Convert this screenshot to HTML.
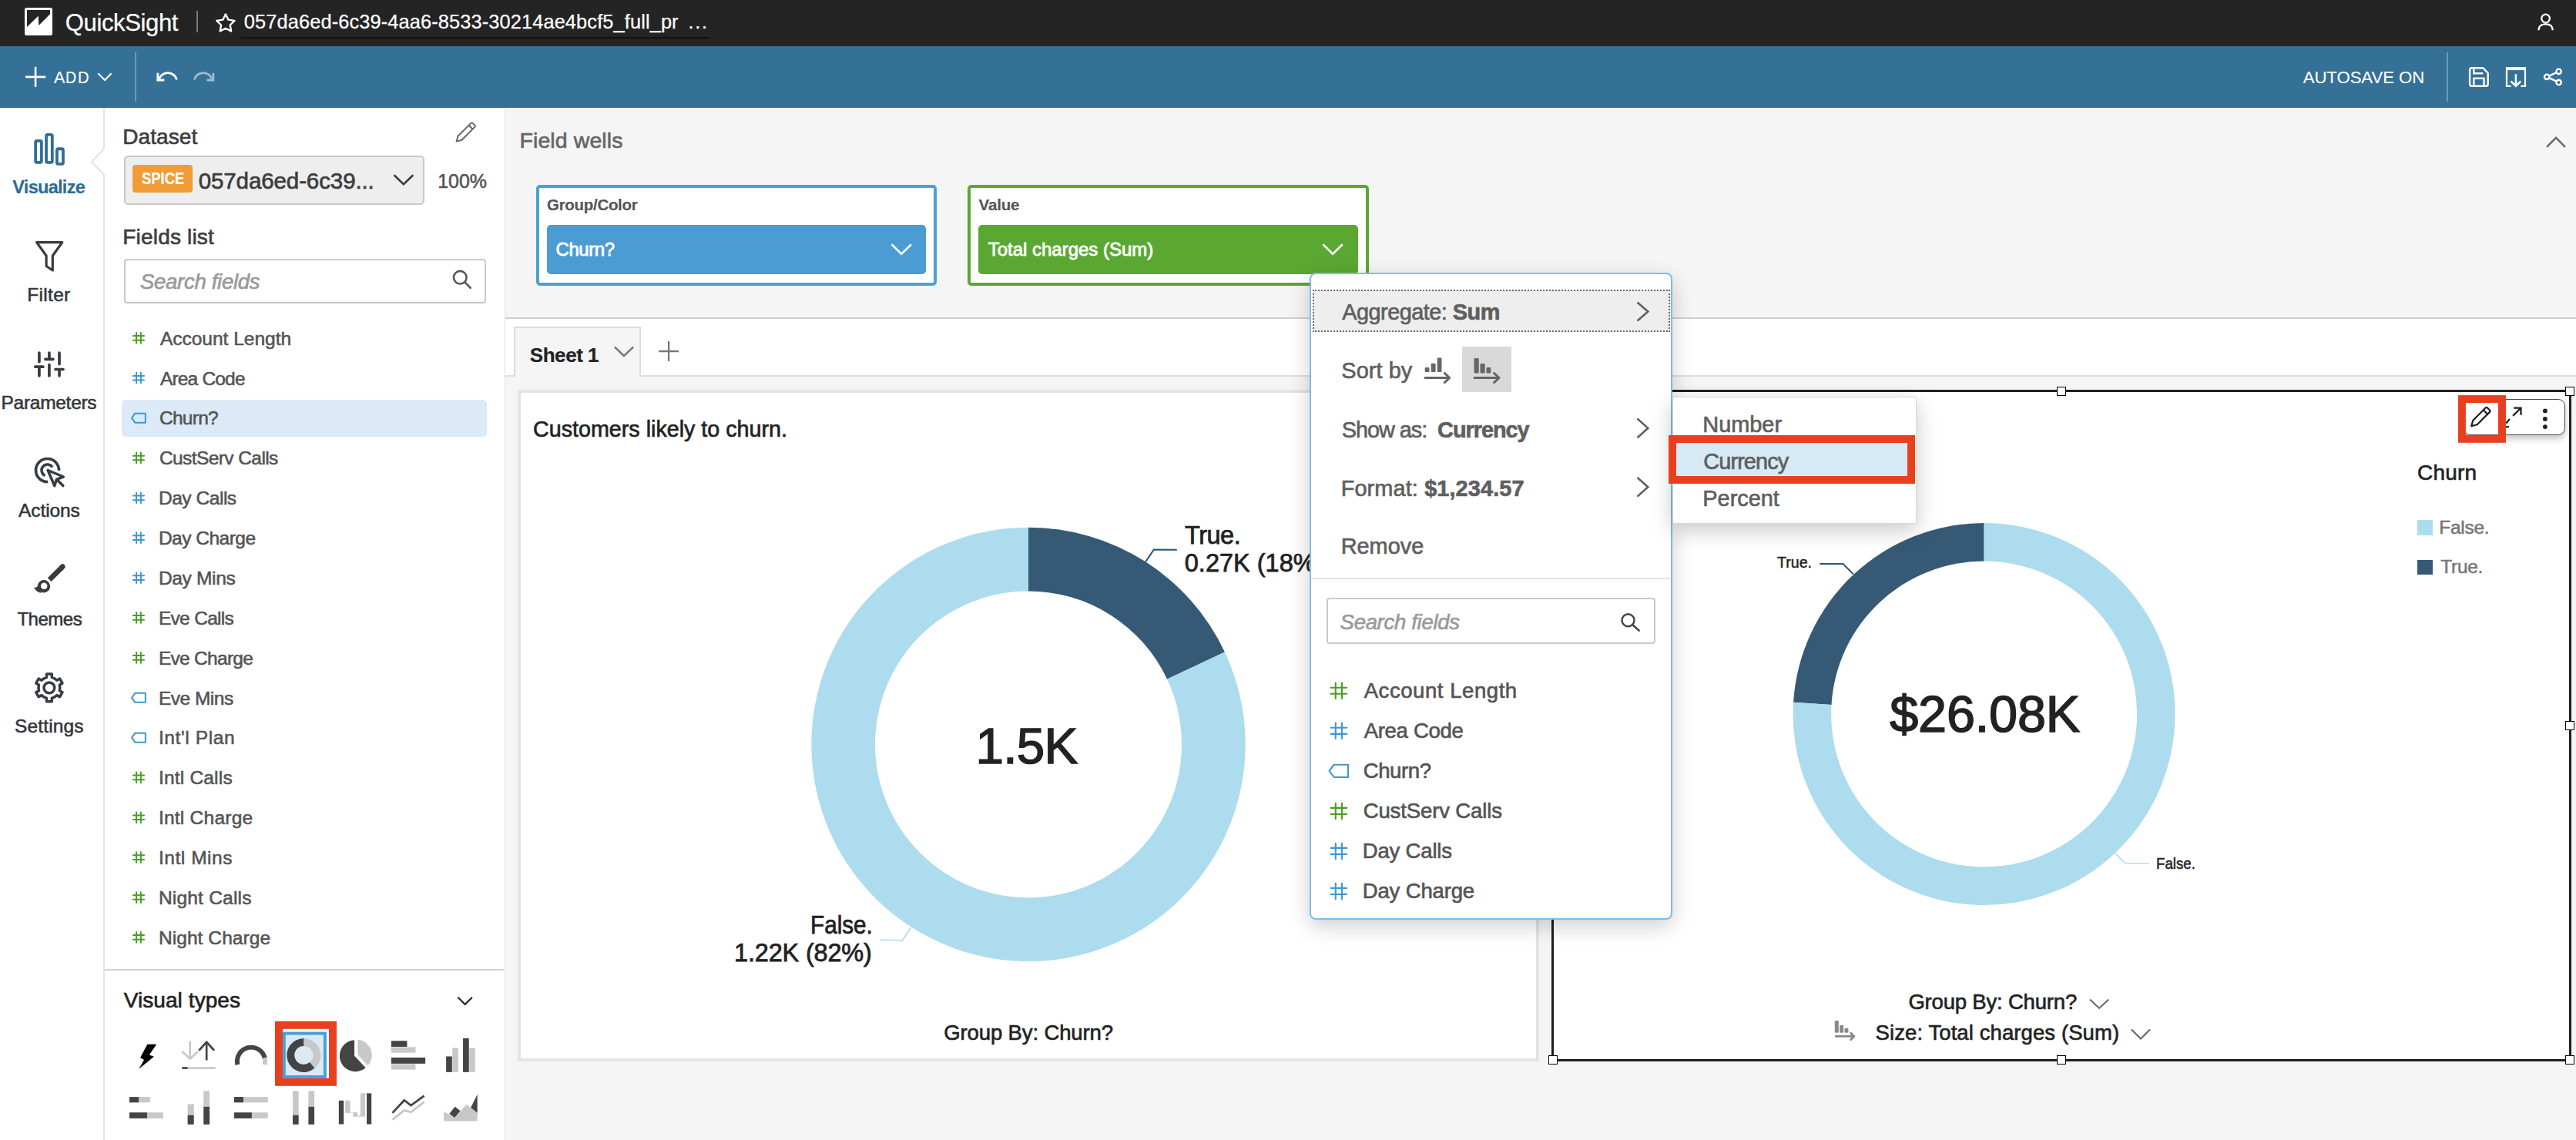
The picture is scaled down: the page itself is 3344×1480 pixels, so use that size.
<!DOCTYPE html>
<html><head><meta charset="utf-8"><title>QuickSight</title>
<style>
html,body{margin:0;padding:0;width:3344px;height:1480px;overflow:hidden;background:#f4f4f4}
body{position:relative;font-family:"Liberation Sans",sans-serif}
.a{position:absolute;display:block}
.t{position:absolute;white-space:pre;font-family:"Liberation Sans",sans-serif}
b{font-weight:bold}
</style></head><body>
<div class="a" style="left:0px;top:0px;width:3344px;height:60px;background:#242424"></div><div class="a" style="left:0px;top:60px;width:3344px;height:80px;background:#357096"></div><div class="a" style="left:0px;top:140px;width:135px;height:1340px;background:#fff"></div><div class="a" style="left:135px;top:140px;width:520px;height:1340px;background:#fff"></div><div class="a" style="left:654.5px;top:140px;width:1.5px;height:1340px;background:#e0e0e0"></div><div class="a" style="left:656px;top:140px;width:2688px;height:273px;background:#f5f5f5"></div><div class="a" style="left:656px;top:412px;width:2688px;height:2px;background:#cfcfcf"></div><div class="a" style="left:656px;top:414px;width:2688px;height:74px;background:#fff"></div><div class="a" style="left:656px;top:487px;width:2688px;height:2px;background:#dedede"></div><div class="a" style="left:656px;top:489px;width:2688px;height:991px;background:#f5f5f5"></div><svg class="a" style="left:0px;top:0px" width="100" height="60" viewBox="0 0 100 60"><rect x="32" y="10" width="36" height="36" rx="2.5" fill="#fff"/><polygon points="35,13 65,13 65,18.2 50.35,33 49.7,20.7 35,35.1" fill="#242424"/></svg><div class="a" style="left:255px;top:14px;width:2px;height:28px;background:#7a7a7a"></div><svg class="a" style="left:260px;top:0px" width="60" height="60" viewBox="260 0 60 60"><polygon points="292.90,18.40 296.49,25.66 304.50,26.83 298.70,32.49 300.07,40.47 292.90,36.70 285.73,40.47 287.10,32.49 281.30,26.83 289.31,25.66" fill="none" stroke="#fff" stroke-width="2.4" stroke-linejoin="round"/></svg><div class="a" style="left:313px;top:48.3px;width:608px;height:1.6px;background:#111"></div><svg class="a" style="left:3280px;top:0px" width="60" height="60" viewBox="3280 0 60 60"><circle cx="3304.6" cy="24" r="5.3" fill="none" stroke="#fff" stroke-width="2.3"/><path d="M3295.4,39.3 C3295.4,34 3299,31.3 3304.6,31.3 C3310.2,31.3 3313.8,34 3313.8,39.3" fill="none" stroke="#fff" stroke-width="2.3"/></svg><svg class="a" style="left:0px;top:60px" width="300" height="80" viewBox="0 60 300 80"><path d="M46.1,86.8 V113 M33,99.9 H59.2" stroke="#fff" stroke-width="2.6"/><polyline points="127.3,95.3 136.1,104 144.6,95.2" fill="none" stroke="#fff" stroke-width="2"/><path d="M204.8,94.8 V104 H213.3" fill="none" stroke="#fff" stroke-width="2.8"/><path d="M206.5,102.5 A12,12 0 0 1 229.4,103.5" fill="none" stroke="#fff" stroke-width="2.8"/><path d="M276.9,94.8 V104 H268.4" fill="none" stroke="#9dbdd2" stroke-width="2.8"/><path d="M275.2,102.5 A12,12 0 0 0 252.3,103.5" fill="none" stroke="#9dbdd2" stroke-width="2.8"/></svg><div class="a" style="left:175px;top:68px;width:2px;height:64px;background:#6d99b8"></div><div class="a" style="left:3176px;top:68px;width:2px;height:64px;background:#6d99b8"></div><svg class="a" style="left:3190px;top:60px" width="154" height="80" viewBox="3190 60 154 80"><path d="M3208,88.3 H3223.5 L3229.7,95 V109.5 A2.2,2.2 0 0 1 3227.5,111.7 H3208.3 A2.2,2.2 0 0 1 3206.1,109.5 V90.5 A2.2,2.2 0 0 1 3208.3,88.3 Z" fill="none" stroke="#fff" stroke-width="2.4" stroke-linejoin="round"/><path d="M3211.3,88.5 V95.2 H3223.3" fill="none" stroke="#fff" stroke-width="2.4"/><path d="M3211.3,111.5 V101.6 H3224.5 V111.5" fill="none" stroke="#fff" stroke-width="2.4"/><path d="M3252.9,89.1 H3279" stroke="#fff" stroke-width="4"/><path d="M3254,89 V111.8 H3259.7 M3272.2,111.8 H3278 V89" fill="none" stroke="#fff" stroke-width="2.2"/><path d="M3265.9,96.3 V111.5 M3259.6,105.5 L3265.9,111.8 L3272.2,105.5" fill="none" stroke="#fff" stroke-width="2.5"/><circle cx="3321.6" cy="92.8" r="3.2" fill="none" stroke="#fff" stroke-width="2.4"/><circle cx="3306.2" cy="99.8" r="3.2" fill="none" stroke="#fff" stroke-width="2.4"/><circle cx="3321.6" cy="106.9" r="3.2" fill="none" stroke="#fff" stroke-width="2.4"/><path d="M3309.1,98.5 L3318.7,94.1 M3309.1,101.1 L3318.7,105.6" stroke="#fff" stroke-width="2.4"/></svg><svg class="a" style="left:100px;top:140px" width="60" height="1340" viewBox="100 140 60 1340"><polyline points="135,140 135,193.3 119,210 135,227 135,1480" fill="none" stroke="#dddddd" stroke-width="1.6"/></svg><svg class="a" style="left:0px;top:140px" width="135" height="800" viewBox="0 140 135 800"><rect x="46.15" y="182.85" width="7.7" height="28" rx="1.6" fill="none" stroke="#336d96" stroke-width="3.8"/><rect x="60.05" y="174.95" width="7.75" height="35.9" rx="1.6" fill="none" stroke="#336d96" stroke-width="3.8"/><rect x="73.95" y="193.25" width="8" height="19.6" rx="1.6" fill="none" stroke="#336d96" stroke-width="3.8"/><polygon points="47.6,314.6 80.8,314.6 68.3,332 68.3,351 60.1,345.5 60.1,332" fill="none" stroke="#393b40" stroke-width="3.2" stroke-linejoin="round"/><path d="M50.9,458.2 V469.6 M50.9,476.2 V487.8 M45.9,476.2 H55.9 M63.9,458.2 V466.3 M63.9,473.6 V487.8 M58.9,466.3 H68.9 M77,458.2 V472.6 M77,479.5 V487.8 M72,479.5 H82" stroke="#393b40" stroke-width="3.7" stroke-linecap="round"/><path d="M62.3,625.5 A15,15 0 1 1 76.5,610.9" fill="none" stroke="#393b40" stroke-width="3.7"/><path d="M58.5,617.5 A7.6,7.6 0 1 1 68,606.5" fill="none" stroke="#393b40" stroke-width="3.5"/><polygon points="62.1,610.5 82.3,619 73.5,622.3 70.8,630.8" fill="none" stroke="#393b40" stroke-width="3.5" stroke-linejoin="round"/><path d="M74.5,623.3 L81.8,630.6" stroke="#393b40" stroke-width="3.6" stroke-linecap="round"/><path d="M64.2,752.7 L80.6,736.3" stroke="#393b40" stroke-width="6.8" stroke-linecap="butt"/><path d="M79.6,737.3 L81.2,735.7" stroke="#393b40" stroke-width="6.8" stroke-linecap="round"/><path fill-rule="evenodd" fill="#393b40" d="M65.1,761.3 A8.2,8.2 0 1 1 48.7,761.3 A8.2,8.2 0 1 1 65.1,761.3 Z M61.5,760.7 A4.3,4.3 0 1 0 52.9,760.7 A4.3,4.3 0 1 0 61.5,760.7 Z"/><path fill="#393b40" d="M44.2,762.3 C46.8,763.2 48.6,762.3 49.4,760 L53.5,769.8 C49,769.2 45.6,766.2 44.2,762.3 Z"/></svg><svg class="a" style="left:0px;top:840px" width="135" height="100" viewBox="0 840 135 100"><polygon points="56.95,880.86 60.44,879.44 60.51,875.12 67.29,875.12 67.36,879.44 70.85,880.86 73.83,883.17 77.60,881.07 80.99,886.95 77.29,889.16 77.80,892.90 77.29,896.64 80.99,898.85 77.60,904.73 73.83,902.63 70.85,904.94 67.36,906.36 67.29,910.68 60.51,910.68 60.44,906.36 56.95,904.94 53.97,902.63 50.20,904.73 46.81,898.85 50.51,896.64 50.00,892.90 50.51,889.16 46.81,886.95 50.20,881.07 53.97,883.17" fill="none" stroke="#393b40" stroke-width="3.5" stroke-linejoin="round"/><circle cx="63.9" cy="892.9" r="6.9" fill="none" stroke="#393b40" stroke-width="3.4"/></svg><svg class="a" style="left:580px;top:150px" width="50" height="50" viewBox="580 150 50 50"><path d="M592.6,183.6 L594.5,176.8 L611.4,159.9 A1.6,1.6 0 0 1 613.7,159.9 L616.4,162.6 A1.6,1.6 0 0 1 616.4,164.9 L599.5,181.8 Z M608.6,162.8 L613.5,167.7" fill="none" stroke="#666" stroke-width="2" stroke-linejoin="round"/></svg><div class="a" style="left:160.7px;top:202.4px;width:390.7px;height:64.1px;background:#eeeeee;border:2px solid #c9c9c9;border-radius:5px;box-sizing:border-box"></div><div class="a" style="left:172.3px;top:214px;width:77.7px;height:35.6px;background:#f09d37;border-radius:4px"></div><svg class="a" style="left:500px;top:210px" width="50" height="40" viewBox="500 210 50 40"><polyline points="511.5,227.2 523.9,239.3 536.3,227.2" fill="none" stroke="#3d3d3d" stroke-width="2.6"/></svg><div class="a" style="left:160.7px;top:335.7px;width:470.3px;height:58px;background:#fff;border:2px solid #c9c9c9;border-radius:4px;box-sizing:border-box"></div><svg class="a" style="left:580px;top:340px" width="40" height="45" viewBox="580 340 40 45"><circle cx="597.3" cy="360.2" r="8.3" fill="none" stroke="#575757" stroke-width="2.6"/><path d="M603.4,366.4 L610.7,373.7" stroke="#575757" stroke-width="2.7" stroke-linecap="round"/></svg><div class="a" style="left:157.9px;top:518.8px;width:474.4px;height:47.9px;background:#dbeaf6;border-radius:5px"></div><svg class="a" style="left:150px;top:400px" width="60" height="850" viewBox="150 400 60 850"><path d="M177.05,432.00 V445.70 M182.85,432.00 V445.70 M172.90,436.02 H187.00 M172.90,441.68 H187.00" stroke="#4a9e24" stroke-width="2" stroke-linecap="round"/><path d="M177.05,483.87 V497.57 M182.85,483.87 V497.57 M172.90,487.89 H187.00 M172.90,493.55 H187.00" stroke="#3e97d3" stroke-width="2" stroke-linecap="round"/><polygon points="171.00,542.70 175.35,536.70 188.80,536.70 188.80,548.70 175.35,548.70" fill="none" stroke="#3e97d3" stroke-width="2" stroke-linejoin="round"/><path d="M177.05,587.61 V601.31 M182.85,587.61 V601.31 M172.90,591.63 H187.00 M172.90,597.29 H187.00" stroke="#4a9e24" stroke-width="2" stroke-linecap="round"/><path d="M177.05,639.48 V653.18 M182.85,639.48 V653.18 M172.90,643.50 H187.00 M172.90,649.16 H187.00" stroke="#3e97d3" stroke-width="2" stroke-linecap="round"/><path d="M177.05,691.35 V705.05 M182.85,691.35 V705.05 M172.90,695.37 H187.00 M172.90,701.03 H187.00" stroke="#3e97d3" stroke-width="2" stroke-linecap="round"/><path d="M177.05,743.22 V756.92 M182.85,743.22 V756.92 M172.90,747.24 H187.00 M172.90,752.90 H187.00" stroke="#3e97d3" stroke-width="2" stroke-linecap="round"/><path d="M177.05,795.09 V808.79 M182.85,795.09 V808.79 M172.90,799.11 H187.00 M172.90,804.77 H187.00" stroke="#4a9e24" stroke-width="2" stroke-linecap="round"/><path d="M177.05,846.96 V860.66 M182.85,846.96 V860.66 M172.90,850.98 H187.00 M172.90,856.64 H187.00" stroke="#4a9e24" stroke-width="2" stroke-linecap="round"/><polygon points="171.00,905.79 175.35,899.79 188.80,899.79 188.80,911.79 175.35,911.79" fill="none" stroke="#3e97d3" stroke-width="2" stroke-linejoin="round"/><polygon points="171.00,957.66 175.35,951.66 188.80,951.66 188.80,963.66 175.35,963.66" fill="none" stroke="#3e97d3" stroke-width="2" stroke-linejoin="round"/><path d="M177.05,1002.57 V1016.27 M182.85,1002.57 V1016.27 M172.90,1006.59 H187.00 M172.90,1012.25 H187.00" stroke="#4a9e24" stroke-width="2" stroke-linecap="round"/><path d="M177.05,1054.44 V1068.14 M182.85,1054.44 V1068.14 M172.90,1058.46 H187.00 M172.90,1064.12 H187.00" stroke="#4a9e24" stroke-width="2" stroke-linecap="round"/><path d="M177.05,1106.31 V1120.01 M182.85,1106.31 V1120.01 M172.90,1110.33 H187.00 M172.90,1115.99 H187.00" stroke="#4a9e24" stroke-width="2" stroke-linecap="round"/><path d="M177.05,1158.18 V1171.88 M182.85,1158.18 V1171.88 M172.90,1162.20 H187.00 M172.90,1167.86 H187.00" stroke="#4a9e24" stroke-width="2" stroke-linecap="round"/><path d="M177.05,1210.05 V1223.75 M182.85,1210.05 V1223.75 M172.90,1214.07 H187.00 M172.90,1219.73 H187.00" stroke="#4a9e24" stroke-width="2" stroke-linecap="round"/></svg><div class="a" style="left:136px;top:1257.5px;width:518px;height:2px;background:#d2d2d2"></div><svg class="a" style="left:580px;top:1280px" width="50" height="40" viewBox="580 1280 50 40"><polyline points="594.5,1294.8 603.7,1304 612.9,1294.8" fill="none" stroke="#222" stroke-width="2.2"/></svg><svg class="a" style="left:130px;top:1300px" width="520" height="180" viewBox="130 1300 520 180"><rect x="362" y="1330.8" width="70" height="74" fill="none" stroke="#e8401f" stroke-width="10"/><rect x="368.8" y="1341.6" width="53.10" height="56.40" fill="#d9eaf6" stroke="#4a9fd8" stroke-width="4"/><polygon points="191.3,1355.8 203.2,1355.8 193.8,1369.5 199.9,1371.7 180.3,1387.7 187,1376 182.1,1373" fill="#000"/><polyline points="236.36,1364.87 246.67,1374.74 257.19,1364.87" fill="none" stroke="#c8c8c8" stroke-width="2.6999999999999997"/><polyline points="246.67,1351.71 246.67,1374.74" fill="none" stroke="#c8c8c8" stroke-width="2.7"/><polyline points="258.29,1363.77 268.16,1352.81 278.03,1363.77" fill="none" stroke="#444444" stroke-width="2.7"/><polyline points="268.16,1352.81 268.16,1376.49" fill="none" stroke="#444444" stroke-width="2.7"/><rect x="236.36" y="1385.26" width="43.42" height="2.63" fill="#c8c8c8"/><rect x="236.36" y="1385.26" width="7.24" height="2.63" fill="#444444"/><path d="M305.52,1382.99 A21.2,21.2 0 1 1 346.66,1372.73 L340.71,1374.10 A15.1,15.1 0 1 0 311.41,1381.41 Z" fill="#444444"/><path d="M346.66,1372.73 A21.2,21.2 0 0 1 346.48,1382.99 L340.59,1381.41 A15.1,15.1 0 0 0 340.71,1374.10 Z" fill="#c8c8c8"/><path d="M394.25,1347.91 A22,22 0 0 1 408.40,1386.77 L401.97,1379.10 A12,12 0 0 0 394.25,1357.91 Z" fill="#c8c8c8"/><path d="M408.40,1386.77 A22,22 0 1 1 394.25,1347.91 L394.25,1357.91 A12,12 0 1 0 401.97,1379.10 Z" fill="#444444"/><path d="M460.04,1370.79 L460.04,1350.18 A20.5,20.5 0 1 0 474.74,1386.14 Z" fill="#444444"/><path d="M464.43,1369.25 L464.43,1349.52 A20.5,20.5 0 0 1 477.59,1383.51 Z" fill="#c8c8c8"/><rect x="507.85" y="1351.27" width="20.61" height="7.68" fill="#444444"/><rect x="507.85" y="1359.39" width="31.58" height="7.24" fill="#c8c8c8"/><rect x="507.85" y="1372.98" width="44.30" height="7.89" fill="#444444"/><rect x="507.85" y="1381.32" width="31.58" height="7.24" fill="#c8c8c8"/><rect x="579.12" y="1371.45" width="7.68" height="20.39" fill="#444444"/><rect x="587.24" y="1360.48" width="7.68" height="31.36" fill="#c8c8c8"/><rect x="601.05" y="1347.98" width="7.68" height="43.86" fill="#444444"/><rect x="609.17" y="1360.48" width="7.68" height="31.36" fill="#c8c8c8"/><rect x="167.94" y="1424.08" width="12.06" height="7.24" fill="#444444"/><rect x="180.00" y="1424.08" width="14.69" height="7.24" fill="#c8c8c8"/><rect x="167.94" y="1444.25" width="23.03" height="7.68" fill="#444444"/><rect x="190.96" y="1444.25" width="20.83" height="7.68" fill="#c8c8c8"/><rect x="243.60" y="1433.51" width="8.11" height="14.25" fill="#c8c8c8"/><rect x="243.60" y="1447.76" width="8.11" height="12.06" fill="#444444"/><rect x="264.21" y="1416.40" width="7.89" height="20.39" fill="#c8c8c8"/><rect x="264.21" y="1436.80" width="7.89" height="23.03" fill="#444444"/><rect x="303.90" y="1424.08" width="12.06" height="7.24" fill="#444444"/><rect x="315.96" y="1424.08" width="31.80" height="7.24" fill="#c8c8c8"/><rect x="303.90" y="1444.25" width="23.03" height="7.68" fill="#444444"/><rect x="326.93" y="1444.25" width="20.83" height="7.68" fill="#c8c8c8"/><rect x="380.00" y="1416.40" width="7.68" height="31.36" fill="#c8c8c8"/><rect x="380.00" y="1447.76" width="7.68" height="12.06" fill="#444444"/><rect x="400.39" y="1416.40" width="7.68" height="20.39" fill="#c8c8c8"/><rect x="400.39" y="1436.80" width="7.68" height="23.03" fill="#444444"/><rect x="439.82" y="1428.83" width="6.38" height="30.69" fill="#444444"/><rect x="448.17" y="1428.83" width="6.38" height="15.96" fill="#c8c8c8"/><rect x="454.55" y="1443.57" width="3.68" height="0.98" fill="#c8c8c8"/><rect x="458.24" y="1444.18" width="6.14" height="5.52" fill="#c8c8c8"/><rect x="464.38" y="1448.48" width="3.44" height="1.23" fill="#c8c8c8"/><rect x="467.81" y="1419.38" width="6.14" height="30.33" fill="#c8c8c8"/><rect x="473.95" y="1419.38" width="2.09" height="0.98" fill="#c8c8c8"/><rect x="476.04" y="1419.38" width="6.14" height="40.15" fill="#444444"/><polyline points="509.39,1444.91 524.74,1428.46 533.51,1435.04 550.61,1422.54" fill="none" stroke="#444444" stroke-width="2.8"/><polyline points="509.39,1453.68 524.74,1441.62 533.51,1443.82 550.61,1430.66" fill="none" stroke="#c8c8c8" stroke-width="2.8"/><polygon points="576.10,1442.95 590.22,1450.93 605.57,1433.74 619.69,1444.79 619.69,1455.48 576.10,1455.48" fill="#c8c8c8"/><polygon points="583.22,1446.02 590.59,1436.81 597.59,1442.34 590.22,1450.93" fill="#444444"/><polygon points="611.09,1438.04 619.69,1420.85 619.69,1444.79" fill="#444444"/></svg><div class="a" style="left:696.2px;top:240.2px;width:519.4px;height:131.2px;background:#fff;border:4px solid #4d9fd6;border-radius:5px;box-sizing:border-box"></div><div class="a" style="left:710.2px;top:292.3px;width:492.1px;height:63.4px;background:#4a9cd3;border-radius:5px"></div><div class="a" style="left:1255.8px;top:240.2px;width:520.9px;height:131.2px;background:#fff;border:4px solid #5aa832;border-radius:5px;box-sizing:border-box"></div><div class="a" style="left:1270px;top:292.3px;width:492.6px;height:63.4px;background:#5aa832;border-radius:5px"></div><svg class="a" style="left:1100px;top:300px" width="700" height="50" viewBox="1100 300 700 50"><polyline points="1157.5,317.2 1170.2,329.6 1182.9,317.2" fill="none" stroke="#fff" stroke-width="2.6"/><polyline points="1717.4,317.2 1730.1,329.6 1742.8,317.2" fill="none" stroke="#fff" stroke-width="2.6"/></svg><svg class="a" style="left:3290px;top:165px" width="54" height="40" viewBox="3290 165 54 40"><polyline points="3306,190.8 3318,178.8 3330,190.8" fill="none" stroke="#6b6b6b" stroke-width="2.6"/></svg><div class="a" style="left:666.5px;top:424.3px;width:165px;height:65px;background:#f5f5f5;border:2px solid #dcdcdc;border-bottom:none;box-sizing:border-box"></div><svg class="a" style="left:780px;top:430px" width="120" height="50" viewBox="780 430 120 50"><polyline points="797.8,450.3 810,462 822.3,450.3" fill="none" stroke="#777" stroke-width="2.5"/><path d="M868.1,443 V469 M855.2,456 H881" stroke="#777" stroke-width="2.3"/></svg><div class="a" style="left:672px;top:506px;width:1326px;height:872px;background:#fff;border:4px solid #e4e4e4;box-sizing:border-box"></div><svg class="a" style="left:680px;top:510px" width="1310" height="860" viewBox="680 510 1310 860"><path d="M1335.00,684.70 A281.7,281.7 0 0 1 1589.89,846.46 L1515.06,881.67 A199,199 0 0 0 1335.00,767.40 Z" fill="#365a76"/><path d="M1589.89,846.46 A281.7,281.7 0 1 1 1335.00,684.70 L1335.00,767.40 A199,199 0 1 0 1515.06,881.67 Z" fill="#acdcee"/><polyline points="1487.1,729.4 1497.9,713.5 1527.8,713.7" fill="none" stroke="#2e5676" stroke-width="2"/><polyline points="1182.2,1204.3 1171.6,1220.8 1141.9,1220.3" fill="none" stroke="#acdcee" stroke-width="1.6"/></svg><div class="a" style="left:2014px;top:506px;width:1324px;height:872px;background:#fff;border:3.6px solid #1f1f1f;box-sizing:border-box"></div><svg class="a" style="left:2020px;top:515px" width="1300" height="850" viewBox="2020 515 1300 850"><path d="M2328.06,911.86 A248,248 0 0 1 2575.60,679.00 L2575.60,728.50 A198.5,198.5 0 0 0 2377.47,914.88 Z" fill="#365a76"/><path d="M2575.60,679.00 A248,248 0 1 1 2328.06,911.86 L2377.47,914.88 A198.5,198.5 0 1 0 2575.60,728.50 Z" fill="#acdcee"/><polyline points="2362.2,732 2392.5,732 2405.8,745.3" fill="none" stroke="#2e5676" stroke-width="2"/><polyline points="2746,1107.6 2758.7,1121 2789.5,1121" fill="none" stroke="#acdcee" stroke-width="1.6"/></svg><div class="a" style="left:2010.2px;top:502.2px;width:11.6px;height:11.6px;background:#fff;border:1.9px solid #000;box-sizing:border-box"></div><div class="a" style="left:2010.2px;top:1370.2px;width:11.6px;height:11.6px;background:#fff;border:1.9px solid #000;box-sizing:border-box"></div><div class="a" style="left:2670.2px;top:502.2px;width:11.6px;height:11.6px;background:#fff;border:1.9px solid #000;box-sizing:border-box"></div><div class="a" style="left:2670.2px;top:1370.2px;width:11.6px;height:11.6px;background:#fff;border:1.9px solid #000;box-sizing:border-box"></div><div class="a" style="left:3330.2px;top:502.2px;width:11.6px;height:11.6px;background:#fff;border:1.9px solid #000;box-sizing:border-box"></div><div class="a" style="left:3330.2px;top:1370.2px;width:11.6px;height:11.6px;background:#fff;border:1.9px solid #000;box-sizing:border-box"></div><div class="a" style="left:3330.2px;top:936.2px;width:11.6px;height:11.6px;background:#fff;border:1.9px solid #000;box-sizing:border-box"></div><div class="a" style="left:3138px;top:675px;width:20px;height:19.6px;background:#acdcee"></div><div class="a" style="left:3138px;top:726.5px;width:20px;height:19.2px;background:#365a76"></div><div class="a" style="left:3198px;top:518px;width:131.5px;height:47.4px;background:#fff;border:1.3px solid #4a4a4a;border-radius:9px;box-sizing:border-box;box-shadow:0 5px 9px rgba(0,0,0,0.22)"></div><svg class="a" style="left:3180px;top:505px" width="160" height="80" viewBox="3180 505 160 80"><path d="M3208.2,553.3 L3210.3,545.8 L3226.6,529.5 A1.7,1.7 0 0 1 3229,529.5 L3232,532.5 A1.7,1.7 0 0 1 3232,534.9 L3215.7,551.2 Z M3223.8,532.3 L3229.2,537.7" fill="none" stroke="#1f1f1f" stroke-width="2.2" stroke-linejoin="round"/><path d="M3263.2,529.6 H3272.5 V538.7 M3272.3,529.8 L3262.1,539.9 M3257.9,544 L3253.3,549.5 M3253.1,554.1 H3256.8" fill="none" stroke="#1f1f1f" stroke-width="2.3"/><circle cx="3303.9" cy="533.4" r="2.9" fill="#1f1f1f"/><circle cx="3303.9" cy="543.9" r="2.9" fill="#1f1f1f"/><circle cx="3303.9" cy="554.1" r="2.9" fill="#1f1f1f"/><rect x="3195.9" y="518.1" width="52.1" height="51.7" fill="none" stroke="#e8401f" stroke-width="10"/></svg><svg class="a" style="left:2370px;top:1285px" width="440" height="75" viewBox="2370 1285 440 75"><rect x="2381.8" y="1325" width="5" height="15.8" rx="1.2" fill="#888"/><rect x="2388.2" y="1331" width="4.9" height="9.8" rx="1.2" fill="#888"/><rect x="2394.5" y="1335.1" width="4.9" height="5.7" rx="1.2" fill="#888"/><path d="M2383.2,1345.4 H2406.8 M2402.6,1341.2 L2406.9,1345.4 L2402.6,1349.7" fill="none" stroke="#888" stroke-width="2.8" stroke-linecap="round" stroke-linejoin="round"/><polyline points="2713,1297.5 2725.1,1308.9 2737.3,1297.5" fill="none" stroke="#666" stroke-width="2.1"/><polyline points="2766.9,1336.6 2779,1348.6 2791.1,1336.6" fill="none" stroke="#666" stroke-width="2.1"/></svg>
<div class="t" style="left:84.8px;top:14.45px;font-size:31px;line-height:31px;color:#ffffff;letter-spacing:-0.36px;-webkit-text-stroke:0.25px #ffffff">QuickSight</div><div class="t" style="left:316.8px;top:16.31px;font-size:25.4px;line-height:25.4px;color:#ffffff;letter-spacing:0.11px;-webkit-text-stroke:0.25px #ffffff">057da6ed-6c39-4aa6-8533-30214ae4bcf5_full_pr</div><div class="t" style="left:893.4px;top:16.31px;font-size:25.4px;line-height:25.4px;color:#ffffff;letter-spacing:1.7px;-webkit-text-stroke:0.25px #ffffff">...</div><div class="t" style="left:69.9px;top:90.63px;font-size:21.5px;line-height:21.5px;color:#ffffff;transform:scaleX(1.0000);transform-origin:0 0;-webkit-text-stroke:0.15px #ffffff">A</div><div class="t" style="left:84.98px;top:90.63px;font-size:21.5px;line-height:21.5px;color:#ffffff;transform:scaleX(0.9077);transform-origin:0 0;-webkit-text-stroke:0.15px #ffffff">D</div><div class="t" style="left:101.02px;top:90.63px;font-size:21.5px;line-height:21.5px;color:#ffffff;transform:scaleX(0.9385);transform-origin:0 0;-webkit-text-stroke:0.15px #ffffff">D</div><div class="t" style="left:2989.7px;top:90.13px;font-size:22.2px;line-height:22.2px;color:#ffffff;letter-spacing:-0.07px;-webkit-text-stroke:0.1px #ffffff">AUTOSAVE ON</div><div class="t" style="left:16.3px;top:231.53px;font-size:23.5px;line-height:23.5px;color:#2e6b94;font-weight:bold;letter-spacing:-0.71px;-webkit-text-stroke:0.19px #2e6b94">Visualize</div><div class="t" style="left:35.2px;top:370.77px;font-size:24.5px;line-height:24.5px;color:#33363b;letter-spacing:0.32px;-webkit-text-stroke:0.56px #33363b">Filter</div><div class="t" style="left:1.5px;top:510.88px;font-size:24.5px;line-height:24.5px;color:#33363b;letter-spacing:-0.28px;-webkit-text-stroke:0.56px #33363b">Parameters</div><div class="t" style="left:24px;top:650.88px;font-size:24.5px;line-height:24.5px;color:#33363b;letter-spacing:-0.08px;-webkit-text-stroke:0.56px #33363b">Actions</div><div class="t" style="left:22.4px;top:791.7px;font-size:24px;line-height:24px;color:#33363b;letter-spacing:-0.48px;-webkit-text-stroke:0.55px #33363b">Themes</div><div class="t" style="left:19px;top:930.88px;font-size:24.5px;line-height:24.5px;color:#33363b;letter-spacing:0.14px;-webkit-text-stroke:0.56px #33363b">Settings</div><div class="t" style="left:159.3px;top:163.8px;font-size:28px;line-height:28px;color:#3d3d3d;letter-spacing:0.08px;-webkit-text-stroke:0.64px #3d3d3d">Dataset</div><div class="t" style="left:183.64px;top:221.59px;font-size:21.3px;line-height:21.3px;color:#ffffff;font-weight:bold;transform:scaleX(0.8645);transform-origin:0 0;-webkit-text-stroke:0.2px #ffffff">SPICE</div><div class="t" style="left:257.7px;top:219.72px;font-size:29.5px;line-height:29.5px;color:#3d3d3d;letter-spacing:-0.1px;-webkit-text-stroke:0.68px #3d3d3d">057da6ed-6c39...</div><div class="t" style="left:568.3px;top:223.05px;font-size:25px;line-height:25px;color:#555555;letter-spacing:-0.1px;-webkit-text-stroke:0.57px #555555">100%</div><div class="t" style="left:159.3px;top:294.2px;font-size:28px;line-height:28px;color:#3d3d3d;letter-spacing:0.18px;-webkit-text-stroke:0.64px #3d3d3d">Fields list</div><div class="t" style="left:182px;top:351.82px;font-size:27.5px;line-height:27.5px;color:#9a9a9a;font-style:italic;letter-spacing:-0.29px;-webkit-text-stroke:0.63px #9a9a9a">Search fields</div><div class="t" style="left:207.9px;top:427.68px;font-size:24.5px;line-height:24.5px;color:#545454;-webkit-text-stroke:0.56px #545454">Account Length</div><div class="t" style="left:207.9px;top:479.55px;font-size:24.5px;line-height:24.5px;color:#545454;letter-spacing:-0.81px;-webkit-text-stroke:0.56px #545454">Area Code</div><div class="t" style="left:206.9px;top:531.41px;font-size:24.5px;line-height:24.5px;color:#545454;letter-spacing:-0.7px;-webkit-text-stroke:0.56px #545454">Churn?</div><div class="t" style="left:206.9px;top:583.28px;font-size:24.5px;line-height:24.5px;color:#545454;letter-spacing:-0.58px;-webkit-text-stroke:0.56px #545454">CustServ Calls</div><div class="t" style="left:205.9px;top:635.15px;font-size:24.5px;line-height:24.5px;color:#545454;letter-spacing:-0.45px;-webkit-text-stroke:0.56px #545454">Day Calls</div><div class="t" style="left:205.9px;top:687.02px;font-size:24.5px;line-height:24.5px;color:#545454;letter-spacing:-0.51px;-webkit-text-stroke:0.56px #545454">Day Charge</div><div class="t" style="left:205.9px;top:738.89px;font-size:24.5px;line-height:24.5px;color:#545454;letter-spacing:-0.33px;-webkit-text-stroke:0.56px #545454">Day Mins</div><div class="t" style="left:205.9px;top:790.76px;font-size:24.5px;line-height:24.5px;color:#545454;letter-spacing:-0.69px;-webkit-text-stroke:0.56px #545454">Eve Calls</div><div class="t" style="left:205.9px;top:842.63px;font-size:24.5px;line-height:24.5px;color:#545454;letter-spacing:-0.71px;-webkit-text-stroke:0.56px #545454">Eve Charge</div><div class="t" style="left:205.9px;top:894.5px;font-size:24.5px;line-height:24.5px;color:#545454;letter-spacing:-0.49px;-webkit-text-stroke:0.56px #545454">Eve Mins</div><div class="t" style="left:205.9px;top:946.38px;font-size:24.5px;line-height:24.5px;color:#545454;letter-spacing:0.61px;-webkit-text-stroke:0.56px #545454">Int'l Plan</div><div class="t" style="left:205.9px;top:998.24px;font-size:24.5px;line-height:24.5px;color:#545454;letter-spacing:0.2px;-webkit-text-stroke:0.56px #545454">Intl Calls</div><div class="t" style="left:205.9px;top:1050.12px;font-size:24.5px;line-height:24.5px;color:#545454;letter-spacing:0.24px;-webkit-text-stroke:0.56px #545454">Intl Charge</div><div class="t" style="left:205.9px;top:1101.98px;font-size:24.5px;line-height:24.5px;color:#545454;letter-spacing:0.55px;-webkit-text-stroke:0.56px #545454">Intl Mins</div><div class="t" style="left:205.9px;top:1153.86px;font-size:24.5px;line-height:24.5px;color:#545454;letter-spacing:0.21px;-webkit-text-stroke:0.56px #545454">Night Calls</div><div class="t" style="left:205.9px;top:1205.72px;font-size:24.5px;line-height:24.5px;color:#545454;letter-spacing:0.08px;-webkit-text-stroke:0.56px #545454">Night Charge</div><div class="t" style="left:160.7px;top:1285.4px;font-size:28px;line-height:28px;color:#222222;letter-spacing:0.08px;-webkit-text-stroke:0.64px #222222">Visual types</div><div class="t" style="left:674.5px;top:168.07px;font-size:28.5px;line-height:28.5px;color:#666666;letter-spacing:0.09px;-webkit-text-stroke:0.66px #666666">Field wells</div><div class="t" style="left:710px;top:255.97px;font-size:20.5px;line-height:20.5px;color:#555555;font-weight:bold;letter-spacing:-0.3px;-webkit-text-stroke:0.16px #555555">Group/Color</div><div class="t" style="left:721.5px;top:311.9px;font-size:24px;line-height:24px;color:#ffffff;letter-spacing:-0.42px;-webkit-text-stroke:0.8px #ffffff">Churn?</div><div class="t" style="left:1270.5px;top:255.97px;font-size:20.5px;line-height:20.5px;color:#555555;font-weight:bold;letter-spacing:-0.15px;-webkit-text-stroke:0.16px #555555">Value</div><div class="t" style="left:1282.8px;top:311.9px;font-size:24px;line-height:24px;color:#ffffff;letter-spacing:-0.02px;-webkit-text-stroke:0.8px #ffffff">Total charges (Sum)</div><div class="t" style="left:687.8px;top:447.5px;font-size:26px;line-height:26px;color:#222222;font-weight:bold;letter-spacing:-0.45px;-webkit-text-stroke:0.21px #222222">Sheet 1</div><div class="t" style="left:692.1px;top:543.31px;font-size:28.7px;line-height:28.7px;color:#222222;letter-spacing:-0.01px;-webkit-text-stroke:0.66px #222222">Customers likely to churn.</div><div class="t" style="left:1266.4px;top:935.83px;font-size:65.5px;line-height:65.5px;color:#222222;letter-spacing:-0.63px;-webkit-text-stroke:1.51px #222222">1.5K</div><div class="t" style="left:1538px;top:678.98px;font-size:32.5px;line-height:32.5px;color:#222222;letter-spacing:-0.48px;-webkit-text-stroke:0.75px #222222">True.</div><div class="t" style="left:1537.8px;top:714.68px;font-size:32.5px;line-height:32.5px;color:#222222;-webkit-text-stroke:0.75px #222222">0.27K (18%)</div><div class="t" style="left:1051.67px;top:1184.98px;font-size:32.5px;line-height:32.5px;color:#222222;transform:scaleX(0.9131);transform-origin:0 0;-webkit-text-stroke:0.75px #222222">False.</div><div class="t" style="left:953.1px;top:1220.98px;font-size:32.5px;line-height:32.5px;color:#222222;letter-spacing:-0.19px;-webkit-text-stroke:0.75px #222222">1.22K (82%)</div><div class="t" style="left:1225.3px;top:1326.62px;font-size:27.5px;line-height:27.5px;color:#222222;letter-spacing:-0.13px;-webkit-text-stroke:0.63px #222222">Group By: Churn?</div><div class="t" style="left:3138px;top:600.4px;font-size:28px;line-height:28px;color:#222222;letter-spacing:0.2px;-webkit-text-stroke:0.64px #222222">Churn</div><div class="t" style="left:3166.3px;top:673.48px;font-size:24.5px;line-height:24.5px;color:#777777;letter-spacing:-0.3px;-webkit-text-stroke:0.56px #777777">False.</div><div class="t" style="left:3168.3px;top:724.08px;font-size:24.5px;line-height:24.5px;color:#777777;letter-spacing:-0.3px;-webkit-text-stroke:0.56px #777777">True.</div><div class="t" style="left:2453.2px;top:894.18px;font-size:66.5px;line-height:66.5px;color:#222222;letter-spacing:-0.13px;-webkit-text-stroke:1.53px #222222">$26.08K</div><div class="t" style="left:2307.3px;top:720.48px;font-size:20.5px;line-height:20.5px;color:#222222;transform:scaleX(0.9565);transform-origin:0 0;-webkit-text-stroke:0.47px #222222">True.</div><div class="t" style="left:2799.49px;top:1110.88px;font-size:20.5px;line-height:20.5px;color:#222222;transform:scaleX(0.9130);transform-origin:0 0;-webkit-text-stroke:0.47px #222222">False.</div><div class="t" style="left:2477.4px;top:1287.03px;font-size:27.5px;line-height:27.5px;color:#222222;letter-spacing:-0.19px;-webkit-text-stroke:0.63px #222222">Group By: Churn?</div><div class="t" style="left:2434.6px;top:1326.73px;font-size:27.5px;line-height:27.5px;color:#222222;letter-spacing:0.09px;-webkit-text-stroke:0.63px #222222">Size: Total charges (Sum)</div>
<div class="a" style="left:1700px;top:354px;width:470.5px;height:839.5px;background:#fff;border:2px solid #7fbde6;border-radius:8px;box-sizing:border-box;box-shadow:0 8px 28px rgba(0,0,0,0.2)"></div><div class="a" style="left:1704px;top:376px;width:464px;height:55.4px;background:#eeeeee;border:2px dotted #6a6a6a;box-sizing:border-box"></div><svg class="a" style="left:2110px;top:380px" width="50" height="280" viewBox="2110 380 50 280"><polyline points="2125.5,392.5 2139.3,404.5 2125.5,416.5" fill="none" stroke="#5f5f5f" stroke-width="2.6"/><polyline points="2125.5,543.5 2139.3,555.9 2125.5,568.3" fill="none" stroke="#5f5f5f" stroke-width="2.6"/><polyline points="2125.5,620 2139.3,632.3 2125.5,644.6" fill="none" stroke="#5f5f5f" stroke-width="2.6"/></svg><div class="a" style="left:1898.2px;top:450.2px;width:63.6px;height:59.3px;background:#d9d9d9"></div><svg class="a" style="left:1840px;top:445px" width="130" height="70" viewBox="1840 445 130 70"><rect x="1849.7" y="477" width="5.8" height="6" rx="1" fill="#666"/><rect x="1857.7" y="471.8" width="5.9" height="11.2" rx="1" fill="#666"/><rect x="1865.7" y="464.5" width="5.8" height="18.5" rx="1" fill="#666"/><path d="M1850,490.5 H1881.5 M1875.2,484.4 L1881.8,490.5 L1875.2,496.6" fill="none" stroke="#666" stroke-width="3" stroke-linecap="round" stroke-linejoin="round"/><rect x="1913.6" y="465" width="6.1" height="19.4" rx="1" fill="#666"/><rect x="1921.5" y="472" width="6.2" height="12.4" rx="1" fill="#666"/><rect x="1929.5" y="477" width="5.8" height="7.4" rx="1" fill="#666"/><path d="M1914,490.5 H1945.8 M1939.5,484.4 L1946.1,490.5 L1939.5,496.6" fill="none" stroke="#666" stroke-width="3" stroke-linecap="round" stroke-linejoin="round"/></svg><div class="a" style="left:1702px;top:750px;width:466px;height:2px;background:#e2e2e2"></div><div class="a" style="left:1722.3px;top:776.3px;width:426.5px;height:59.3px;background:#fff;border:2px solid #c9c9c9;border-radius:4px;box-sizing:border-box"></div><svg class="a" style="left:2090px;top:785px" width="50" height="45" viewBox="2090 785 50 45"><circle cx="2113.5" cy="805.3" r="8" fill="none" stroke="#444" stroke-width="2.4"/><path d="M2119.2,811 L2127.6,818.6" stroke="#444" stroke-width="2.6" stroke-linecap="round"/></svg><svg class="a" style="left:1710px;top:870px" width="60" height="320" viewBox="1710 870 60 320"><path d="M1733.80,886.55 V906.95 M1742.00,886.55 V906.95 M1727.55,892.70 H1748.25 M1727.55,900.80 H1748.25" stroke="#4a9e24" stroke-width="2.1" stroke-linecap="round"/><path d="M1733.80,938.60 V959.00 M1742.00,938.60 V959.00 M1727.55,944.75 H1748.25 M1727.55,952.85 H1748.25" stroke="#3e97d3" stroke-width="2.1" stroke-linecap="round"/><polygon points="1725.55,1000.85 1731.68,992.75 1750.05,992.75 1750.05,1008.95 1731.68,1008.95" fill="none" stroke="#3e97d3" stroke-width="2.1" stroke-linejoin="round"/><path d="M1733.80,1042.70 V1063.10 M1742.00,1042.70 V1063.10 M1727.55,1048.85 H1748.25 M1727.55,1056.95 H1748.25" stroke="#4a9e24" stroke-width="2.1" stroke-linecap="round"/><path d="M1733.80,1094.75 V1115.15 M1742.00,1094.75 V1115.15 M1727.55,1100.90 H1748.25 M1727.55,1109.00 H1748.25" stroke="#3e97d3" stroke-width="2.1" stroke-linecap="round"/><path d="M1733.80,1146.80 V1167.20 M1742.00,1146.80 V1167.20 M1727.55,1152.95 H1748.25 M1727.55,1161.05 H1748.25" stroke="#3e97d3" stroke-width="2.1" stroke-linecap="round"/></svg>
<div class="t" style="left:1742.3px;top:390.83px;font-size:28.9px;line-height:28.9px;color:#5f5f5f;letter-spacing:-0.53px;-webkit-text-stroke:0.66px #5f5f5f">Aggregate: <b>Sum</b></div><div class="t" style="left:1741.3px;top:466.94px;font-size:28.9px;line-height:28.9px;color:#5f5f5f;letter-spacing:0.08px;-webkit-text-stroke:0.66px #5f5f5f">Sort by</div><div class="t" style="left:1741.7px;top:543.54px;font-size:28.9px;line-height:28.9px;color:#5f5f5f;letter-spacing:-1.05px;-webkit-text-stroke:0.66px #5f5f5f">Show as:&nbsp; <b>Currency</b></div><div class="t" style="left:1740.7px;top:619.84px;font-size:28.9px;line-height:28.9px;color:#5f5f5f;letter-spacing:0.11px;-webkit-text-stroke:0.66px #5f5f5f">Format: <b>$1,234.57</b></div><div class="t" style="left:1740.7px;top:695.34px;font-size:28.9px;line-height:28.9px;color:#5f5f5f;-webkit-text-stroke:0.66px #5f5f5f">Remove</div><div class="t" style="left:1739.6px;top:794.03px;font-size:27.5px;line-height:27.5px;color:#9a9a9a;font-style:italic;letter-spacing:-0.3px;-webkit-text-stroke:0.63px #9a9a9a">Search fields</div><div class="t" style="left:1770.7px;top:882.74px;font-size:27.6px;line-height:27.6px;color:#545454;letter-spacing:0.52px;-webkit-text-stroke:0.63px #545454">Account Length</div><div class="t" style="left:1770.7px;top:934.79px;font-size:27.6px;line-height:27.6px;color:#545454;letter-spacing:-0.34px;-webkit-text-stroke:0.63px #545454">Area Code</div><div class="t" style="left:1769.7px;top:986.84px;font-size:27.6px;line-height:27.6px;color:#545454;letter-spacing:-0.44px;-webkit-text-stroke:0.63px #545454">Churn?</div><div class="t" style="left:1769.7px;top:1038.89px;font-size:27.6px;line-height:27.6px;color:#545454;letter-spacing:-0.17px;-webkit-text-stroke:0.63px #545454">CustServ Calls</div><div class="t" style="left:1768.7px;top:1090.94px;font-size:27.6px;line-height:27.6px;color:#545454;letter-spacing:-0.22px;-webkit-text-stroke:0.63px #545454">Day Calls</div><div class="t" style="left:1768.7px;top:1142.99px;font-size:27.6px;line-height:27.6px;color:#545454;letter-spacing:-0.19px;-webkit-text-stroke:0.63px #545454">Day Charge</div>
<div class="a" style="left:2170.6px;top:514.9px;width:317.4px;height:164.9px;background:#fff;border:1px solid #d8d8d8;border-radius:3px;box-sizing:border-box;box-shadow:0 8px 28px rgba(0,0,0,0.22)"></div><div class="a" style="left:2175.8px;top:575px;width:300.2px;height:44px;background:#d6eaf6"></div>
<div class="t" style="left:2210.3px;top:536.74px;font-size:28.9px;line-height:28.9px;color:#5f5f5f;-webkit-text-stroke:0.66px #5f5f5f">Number</div><div class="t" style="left:2211.3px;top:584.63px;font-size:28.9px;line-height:28.9px;color:#5f5f5f;letter-spacing:-0.9px;-webkit-text-stroke:0.66px #5f5f5f">Currency</div><div class="t" style="left:2210.3px;top:632.54px;font-size:28.9px;line-height:28.9px;color:#5f5f5f;-webkit-text-stroke:0.66px #5f5f5f">Percent</div>
<div class="a" style="left:2166px;top:565.1px;width:319.6px;height:63.4px;border:10px solid #e8401f;box-sizing:border-box"></div>
</body></html>
